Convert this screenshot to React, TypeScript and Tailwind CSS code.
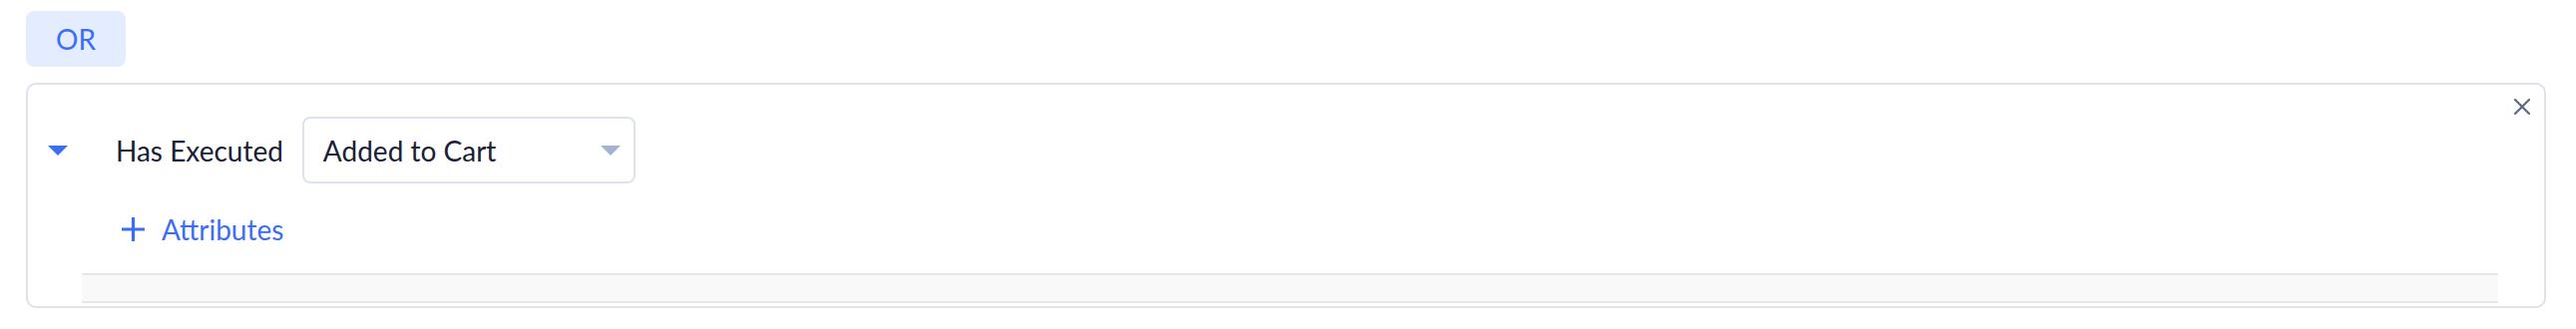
const font = { fontFamily: "Lato, 'Open Sans', sans-serif" };

const Caret = ({ color, className }: { color: string; className?: string }) => (
    <svg width="20" height="10" viewBox="0 0 20 10" className={className}>
        <path d="M0 0 L20 0 L10 10 Z" fill={color} />
    </svg>
);

const App = () => {
    return (
        <div className="bg-white w-full h-[330px] pl-[26px] pr-[30px] pt-[11px]" style={font}>
            <div className="w-[100px] h-[56px] rounded-[8px] bg-[#e4edff] flex items-center justify-center text-[28px] leading-[32px] text-[#3b6ef5]">
                OR
            </div>

            <div className="relative mt-[16px] h-[226px] border-2 border-[#dde1f0] rounded-[10px]">
                <button className="absolute right-[14px] top-[14px]">
                    <svg width="16" height="16" viewBox="0 0 16 16">
                        <path d="M1 1 L15 15 M15 1 L1 15" stroke="#5b6a8a" strokeWidth="2.2" strokeLinecap="round" />
                    </svg>
                </button>

                <div className="flex items-center pt-[32px] pl-[20px]">
                    <Caret color="#3b6ef5" />
                    <span className="ml-[48px] text-[28px] leading-[32px] text-[#1a2035]">Has Executed</span>
                    <div className="ml-[19px] w-[334px] h-[67px] border-2 border-[#dde2ef] rounded-[8px] flex items-center justify-between pl-[19px] pr-[13px]">
                        <span className="text-[28px] leading-[32px] text-[#1a2035]">Added to Cart</span>
                        <Caret color="#a6b3cf" />
                    </div>
                </div>

                <div className="flex items-center mt-[30px] pl-[94px] h-[32px] text-[#3b6ef5]">
                    <svg width="23" height="24" viewBox="0 0 23 24">
                        <path d="M11.5 0 V24 M0 12 H23" stroke="#3b6ef5" strokeWidth="3.2" />
                    </svg>
                    <span className="ml-[17px] text-[28px] leading-[32px]">Attributes</span>
                </div>

                <div className="mt-[28px] ml-[54px] mr-[46px] h-[30px] border-y-2 border-[#e7e7e7] bg-[#f9f9f9]"></div>
            </div>
        </div>
    );
};

export default App;
